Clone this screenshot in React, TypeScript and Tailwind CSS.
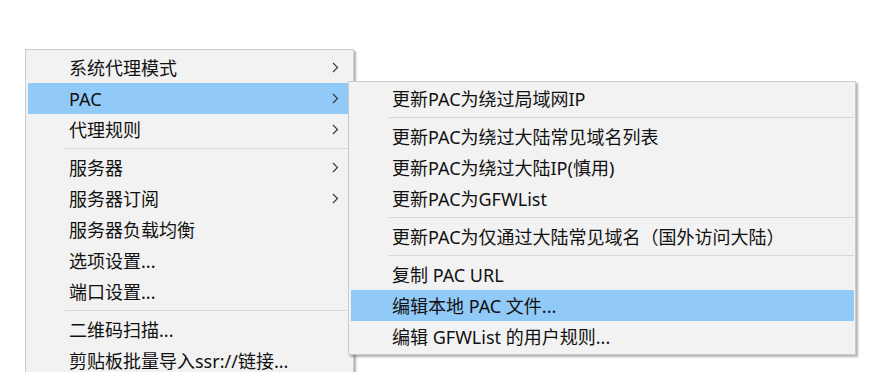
import React from "react";

type Entry = { label?: string; sub?: boolean; active?: boolean; sep?: boolean };

const mainItems: Entry[] = [
  { label: "系统代理模式", sub: true },
  { label: "PAC", sub: true, active: true },
  { label: "代理规则", sub: true },
  { sep: true },
  { label: "服务器", sub: true },
  { label: "服务器订阅", sub: true },
  { label: "服务器负载均衡" },
  { label: "选项设置..." },
  { label: "端口设置..." },
  { sep: true },
  { label: "二维码扫描..." },
  { label: "剪贴板批量导入ssr://链接..." },
];

const pacItems: Entry[] = [
  { label: "更新PAC为绕过局域网IP" },
  { sep: true },
  { label: "更新PAC为绕过大陆常见域名列表" },
  { label: "更新PAC为绕过大陆IP(慎用)" },
  { label: "更新PAC为GFWList" },
  { sep: true },
  { label: "更新PAC为仅通过大陆常见域名（国外访问大陆）" },
  { sep: true },
  { label: "复制 PAC URL" },
  { label: "编辑本地 PAC 文件...", active: true },
  { label: "编辑 GFWList 的用户规则..." },
];

const Chevron = () => (
  <svg width="7" height="11" viewBox="0 0 7 11" fill="none" className="shrink-0">
    <path d="M1 1 L5.5 5.5 L1 10" stroke="#333" strokeWidth="1.1" />
  </svg>
);

const MenuList = ({ items }: { items: Entry[] }) => (
  <>
    {items.map((it, i) =>
      it.sep ? (
        <div key={i} className="h-[7px] pt-[3px] pl-[37px]">
          <div className="h-px bg-[#d7d7d7]" />
        </div>
      ) : (
        <div
          key={i}
          className={`flex h-[31px] items-center justify-between pl-[41px] pr-[12px] ${
            it.active ? "bg-[#91c9f7]" : ""
          }`}
        >
          <span className="whitespace-nowrap">{it.label}</span>
          {it.sub && <Chevron />}
        </div>
      )
    )}
  </>
);

export default function App() {
  return (
    <div
      className="relative h-[372px] w-[878px] overflow-hidden bg-white text-[18px] leading-none text-[#111]"
      style={{ fontFamily: '"Noto Sans", "Noto Sans CJK SC", sans-serif' }}
    >
      {/* main context menu (continues below the visible area) */}
      <div className="ml-[25px] mt-[49px] w-[329px] border border-[#cccccc] bg-[#f2f2f2] px-[2px] pt-[2px] pb-[24px] shadow-[2px_2px_2px_rgba(0,0,0,0.3)]">
        <MenuList items={mainItems} />
      </div>

      {/* PAC submenu */}
      <div className="absolute left-[348px] top-[81px] w-[508px] border border-[#cccccc] bg-[#f2f2f2] pl-[2px] pr-px pt-px pb-[2px] shadow-[2px_2px_2px_rgba(0,0,0,0.3)]">
        <MenuList items={pacItems} />
      </div>
    </div>
  );
}
